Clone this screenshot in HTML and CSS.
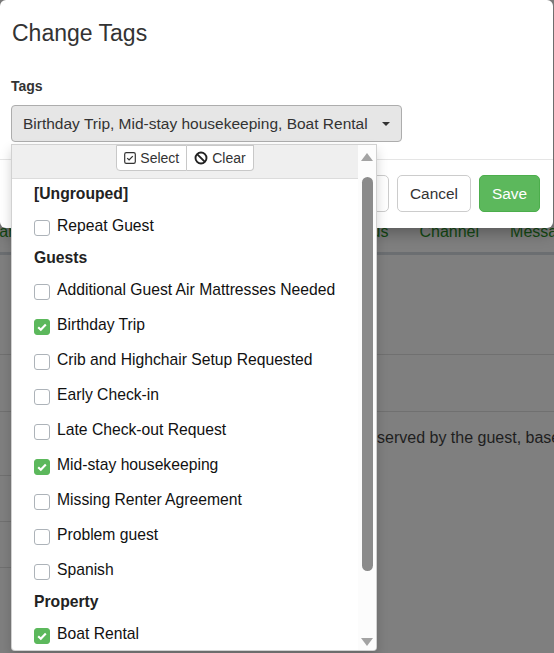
FILE: index.html
```html
<!DOCTYPE html>
<html lang="en">
<head>
<meta charset="utf-8">
<title>Change Tags</title>
<link rel="stylesheet" href="styles.css">
</head>
<body>
<div class="page">
  <div class="tabs">
    <span class="tab tab-first">Plan</span>
    <div class="tab-group">
      <span class="tab">Status</span>
      <span class="tab">Channel</span>
      <span class="tab">Messages</span>
    </div>
  </div>
  <div class="table">
    <div class="row row-1"><div class="cell"></div><div class="cell"></div></div>
    <div class="row row-2"><div class="cell"></div><div class="cell"></div></div>
    <div class="row row-3">
      <div class="cell left">
        <div class="sub sub-1"></div>
        <div class="sub"></div>
        <div class="sub"></div>
      </div>
      <div class="cell right">Nights reserved by the guest, based on the reservation dates.</div>
    </div>
  </div>
</div>

<div class="modal">
  <div class="modal-header">
    <h4 class="modal-title">Change Tags</h4>
  </div>
  <div class="modal-body">
    <label class="field-label">Tags</label>
    <div class="select-wrap">
      <button class="select-btn" type="button">
        <span class="select-text">Birthday Trip, Mid-stay housekeeping, Boat Rental</span>
        <span class="caret"></span>
      </button>
      <div class="menu">
        <div class="menu-main">
          <div class="menu-actions">
            <div class="btn-group">
              <button class="mini-btn" type="button">
                <svg class="ico" width="12" height="12" viewBox="0 0 12 12"><rect x="0.7" y="0.7" width="10.6" height="10.6" rx="1.6" fill="none" stroke="#333" stroke-width="1.2"/><path d="M3.2 6.1 L5.1 7.9 L8.8 4.1" fill="none" stroke="#333" stroke-width="1.3"/></svg>Select
              </button>
              <button class="mini-btn" type="button">
                <svg class="ico" width="14" height="14" viewBox="0 0 14 14"><circle cx="7" cy="7" r="5.5" fill="none" stroke="#222" stroke-width="1.9"/><path d="M3.1 3.1 L10.9 10.9" stroke="#222" stroke-width="1.9"/></svg>Clear
              </button>
            </div>
          </div>
          <ul class="menu-list">
            <li class="group">[Ungrouped]</li>
            <li class="opt"><span class="cb"></span>Repeat Guest</li>
            <li class="group">Guests</li>
            <li class="opt"><span class="cb"></span>Additional Guest Air Mattresses Needed</li>
            <li class="opt"><span class="cb on"><svg width="16" height="16" viewBox="0 0 16 16"><path d="M4.2 8.3 L6.8 10.7 L11.8 5.6" fill="none" stroke="#fff" stroke-width="2.2"/></svg></span>Birthday Trip</li>
            <li class="opt"><span class="cb"></span>Crib and Highchair Setup Requested</li>
            <li class="opt"><span class="cb"></span>Early Check-in</li>
            <li class="opt"><span class="cb"></span>Late Check-out Request</li>
            <li class="opt"><span class="cb on"><svg width="16" height="16" viewBox="0 0 16 16"><path d="M4.2 8.3 L6.8 10.7 L11.8 5.6" fill="none" stroke="#fff" stroke-width="2.2"/></svg></span>Mid-stay housekeeping</li>
            <li class="opt"><span class="cb"></span>Missing Renter Agreement</li>
            <li class="opt"><span class="cb"></span>Problem guest</li>
            <li class="opt"><span class="cb"></span>Spanish</li>
            <li class="group">Property</li>
            <li class="opt"><span class="cb on"><svg width="16" height="16" viewBox="0 0 16 16"><path d="M4.2 8.3 L6.8 10.7 L11.8 5.6" fill="none" stroke="#fff" stroke-width="2.2"/></svg></span>Boat Rental</li>
          </ul>
        </div>
        <div class="scrollbar">
          <div class="arrow-box arrow-top"><span class="arrow up"></span></div>
          <div class="track"><div class="thumb"></div></div>
          <div class="arrow-box"><span class="arrow down"></span></div>
        </div>
      </div>
    </div>
  </div>
  <div class="modal-footer">
    <button class="btn btn-default" type="button">Remove</button>
    <button class="btn btn-default" type="button">Cancel</button>
    <button class="btn btn-success" type="button">Save</button>
  </div>
</div>
</body>
</html>
```

FILE: styles.css
```css
html, body {
  margin: 0;
  width: 554px;
  height: 653px;
  overflow: hidden;
}
body {
  position: relative;
  font-family: "Liberation Sans", Arial, sans-serif;
  background: #7f7f7f;
}

/* background page (under overlay) */
.page {
  padding-top: 214px;
}
.tabs {
  display: flex;
  justify-content: space-between;
  align-items: flex-start;
  height: 38px;
  border-bottom: 3px solid #6b6e71;
}
.tab {
  font-size: 16px;
  line-height: 36px;
  color: #134a13;
  white-space: nowrap;
}
.tab-first {
  margin-left: -15px;
}
.tab-group {
  display: flex;
  gap: 31px;
  margin-right: -29px;
}
.row {
  display: grid;
  grid-template-columns: 300px 1fr;
  border-bottom: 1px solid #707070;
}
.row-1 { height: 99px; }
.row-2 { height: 56px; }
.row-3 { border-bottom: none; }
.sub {
  height: 45px;
  border-bottom: 1px solid #707070;
}
.sub-1 { height: 63px; }
.right {
  padding: 16px 0 0 13px;
  font-size: 16px;
  line-height: 20px;
  color: #1e1e1e;
  white-space: nowrap;
}

/* modal */
.modal {
  position: absolute;
  top: 0;
  left: 0;
  width: 553px;
  background: #fff;
  border-radius: 6px;
  box-shadow: 0 5px 15px rgba(0,0,0,.3);
  color: #333;
}
.modal-header {
  padding: 20px 12px 0;
}
.modal-title {
  margin: 0;
  font-size: 23px;
  line-height: 26px;
  font-weight: normal;
  color: #333;
}
.modal-body {
  padding: 30px 11px 17px;
}
.field-label {
  display: block;
  font-size: 14px;
  font-weight: bold;
  line-height: 20px;
  margin-bottom: 9px;
  color: #333;
}
.select-wrap {
  position: relative;
  width: 391px;
}
.select-btn {
  display: flex;
  align-items: center;
  justify-content: space-between;
  width: 391px;
  height: 37px;
  padding: 0 11px;
  box-sizing: border-box;
  background: #e6e6e6;
  border: 1px solid #adadad;
  border-radius: 4px;
  font-family: inherit;
  font-size: 15.5px;
  color: #333;
  white-space: nowrap;
}
.caret {
  width: 0;
  height: 0;
  border-top: 4px solid #333;
  border-left: 4px solid transparent;
  border-right: 4px solid transparent;
  margin-top: 1px;
}

/* dropdown menu */
.menu {
  position: absolute;
  top: 100%;
  left: 0;
  margin-top: 2px;
  width: 366px;
  height: 507px;
  box-sizing: border-box;
  display: flex;
  background: #fff;
  border: 1px solid rgba(0,0,0,.18);
  border-radius: 0 0 4px 4px;
  box-shadow: 0 6px 12px rgba(0,0,0,.175);
  z-index: 5;
  overflow: hidden;
}
.menu-main {
  width: 346px;
  display: flex;
  flex-direction: column;
}
.menu-actions {
  height: 33px;
  background: #efefef;
  border-bottom: 1px solid #dcdcdc;
  display: flex;
  justify-content: center;
  align-items: flex-start;
}
.btn-group {
  display: flex;
}
.mini-btn {
  display: flex;
  align-items: center;
  gap: 4px;
  height: 26px;
  padding: 0 7px;
  background: #fff;
  border: 1px solid #c8c8c8;
  font-family: inherit;
  font-size: 14px;
  color: #333;
}
.mini-btn + .mini-btn {
  border-left: none;
  border-radius: 0 0 4px 0;
}
.mini-btn:first-child {
  border-radius: 0 0 0 4px;
}
.ico {
  display: block;
}
.menu-list {
  list-style: none;
  margin: 0;
  padding: 0;
  flex: 1;
  overflow: hidden;
}
.group {
  height: 29px;
  line-height: 29px;
  padding-left: 22px;
  font-size: 15.7px;
  font-weight: bold;
  color: #222;
  white-space: nowrap;
}
.opt {
  height: 35px;
  display: flex;
  align-items: center;
  gap: 7px;
  padding-left: 22px;
  font-size: 15.7px;
  color: #111;
  white-space: nowrap;
}
.cb {
  flex: none;
  width: 16px;
  height: 16px;
  box-sizing: border-box;
  border: 1px solid #adb3b9;
  border-radius: 3px;
  background: #fff;
  margin-top: 4px;
}
.cb.on {
  background: #5cb85c;
  border-color: #5cb85c;
}
.cb.on svg {
  display: block;
  margin: -1px;
}

/* fake scrollbar */
.scrollbar {
  width: 18px;
  display: flex;
  flex-direction: column;
  background: #fcfcfc;
}
.arrow-box {
  height: 17px;
  display: flex;
  align-items: center;
  justify-content: center;
}
.arrow-box.arrow-top {
  height: 24px;
}
.arrow {
  width: 0;
  height: 0;
  border-left: 6px solid transparent;
  border-right: 6px solid transparent;
}
.arrow.up {
  border-bottom: 8px solid #a3a3a3;
}
.arrow.down {
  border-top: 8px solid #a3a3a3;
}
.track {
  flex: 1;
  display: flex;
  flex-direction: column;
  align-items: center;
}
.thumb {
  width: 11px;
  height: 394px;
  margin-top: 8px;
  border-radius: 6px;
  background: #8b8b8b;
}

/* footer */
.modal-footer {
  border-top: 1px solid #e5e5e5;
  padding: 15px 13px 16px;
  display: flex;
  justify-content: flex-end;
  gap: 8px;
}
.btn {
  height: 37px;
  padding: 0 12px;
  border-radius: 5px;
  font-family: inherit;
  font-size: 15.4px;
  border: 1px solid #ccc;
}
.btn-default {
  background: #fff;
  color: #333;
}
.btn-success {
  background: #5cb85c;
  border-color: #4cae4c;
  color: #fff;
}
```
